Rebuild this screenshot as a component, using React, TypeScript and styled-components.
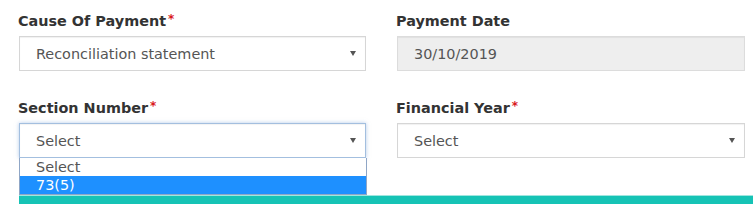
import React from "react";
import styled, { createGlobalStyle } from "styled-components";

const Global = createGlobalStyle`
  html, body { margin: 0; padding: 0; background: #fff; }
  body { font-family: "DejaVu Sans", Verdana, sans-serif; width: 753px; height: 204px; overflow: hidden; }
`;

const Page = styled.div`
  padding: 11px 0 0 19px;
`;

const Form = styled.div`
  display: grid;
  grid-template-columns: 347px 348px;
  column-gap: 31px;
  row-gap: 27px;
`;

const Field = styled.div`
  display: flex;
  flex-direction: column;
  position: relative;
`;

const Label = styled.label`
  font-size: 14.4px;
  font-weight: bold;
  color: #333;
  line-height: 20px;
  height: 20px;
  margin: 0 0 5px -1px;
  white-space: nowrap;
`;

const Star = styled.span`
  color: #d9191c;
  font-size: 12px;
  font-weight: bold;
  position: relative;
  top: -3px;
  margin-left: 2px;
`;

const Box = styled.div<{ $disabled?: boolean; $focused?: boolean }>`
  box-sizing: border-box;
  height: 35px;
  display: flex;
  align-items: center;
  justify-content: space-between;
  padding: 0 9px 0 16px;
  font-size: 14.4px;
  color: #555;
  background: ${(p) => (p.$disabled ? "#eeeeee" : "#fff")};
  border: 1px solid ${(p) => (p.$focused ? "#a3bfdf" : p.$disabled ? "#dcdcdc" : "#d6d6d6")};
  box-shadow: ${(p) =>
    p.$focused
      ? "0 0 4px rgba(120,160,215,0.55), inset 0 1px 1px rgba(0,0,0,0.05)"
      : "inset 0 1px 1px rgba(0,0,0,0.06)"};
`;

const Arrow = styled.span`
  width: 0;
  height: 0;
  border-left: 3px solid transparent;
  border-right: 3px solid transparent;
  border-top: 5px solid #555;
`;

const List = styled.ul`
  position: absolute;
  top: 100%;
  left: 0;
  right: -1px;
  margin: 0;
  padding: 0;
  list-style: none;
  background: #fff;
  border: 1px solid #8fa6c6;
  border-top: none;
  box-sizing: border-box;
  z-index: 2;
`;

const Option = styled.li<{ $active?: boolean }>`
  height: 18px;
  line-height: 18px;
  padding-left: 16px;
  font-size: 14.4px;
  color: ${(p) => (p.$active ? "#fff" : "#555")};
  background: ${(p) => (p.$active ? "#1e90ff" : "#fff")};
`;

const Bar = styled.div`
  margin-top: 37px;
  height: 12px;
  background: #16c3b5;
  border-top: 1px solid #9fe6df;
`;

export default function App() {
  return (
    <>
      <Global />
      <Page>
        <Form>
          <Field>
            <Label>
              Cause Of Payment<Star>*</Star>
            </Label>
            <Box>
              <span>Reconciliation statement</span>
              <Arrow />
            </Box>
          </Field>
          <Field>
            <Label>Payment Date</Label>
            <Box $disabled>
              <span>30/10/2019</span>
            </Box>
          </Field>
          <Field>
            <Label>
              Section Number<Star>*</Star>
            </Label>
            <Box $focused>
              <span>Select</span>
              <Arrow />
            </Box>
            <List>
              <Option>Select</Option>
              <Option $active>73(5)</Option>
            </List>
          </Field>
          <Field>
            <Label>
              Financial Year<Star>*</Star>
            </Label>
            <Box>
              <span>Select</span>
              <Arrow />
            </Box>
          </Field>
        </Form>
        <Bar />
      </Page>
    </>
  );
}
